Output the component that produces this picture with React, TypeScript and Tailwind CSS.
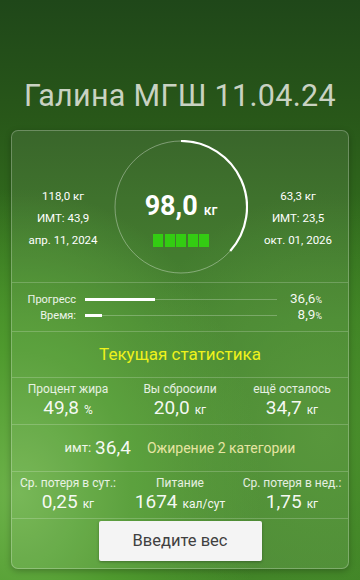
const stats = [
  { label: 'Процент жира', value: '49,8', unit: '%' },
  { label: 'Вы сбросили', value: '20,0', unit: 'кг' },
  { label: 'ещё осталось', value: '34,7', unit: 'кг' },
]

const loss = [
  { label: 'Ср. потеря в сут.:', value: '0,25', unit: 'кг' },
  { label: 'Питание', value: '1674', unit: 'кал/сут' },
  { label: 'Ср. потеря в нед.:', value: '1,75', unit: 'кг' },
]

const bars = [
  { label: 'Прогресс', pct: 36.6, text: '36,6' },
  { label: 'Время:', pct: 8.9, text: '8,9' },
]

function Ring({ pct }: { pct: number }) {
  const a = (pct / 100) * Math.PI * 2
  const r = 66
  const x = 67 + r * Math.sin(a)
  const y = 67 - r * Math.cos(a)
  return (
    <svg width="134" height="134" className="absolute inset-0">
      <circle cx="67" cy="67" r={r} fill="none" stroke="rgba(255,255,255,0.35)" strokeWidth="1" />
      <path
        d={`M67 1 A${r} ${r} 0 ${pct > 50 ? 1 : 0} 1 ${x} ${y}`}
        fill="none"
        stroke="#fff"
        strokeWidth="2.2"
      />
    </svg>
  )
}

function StatRow({ items }: { items: typeof stats }) {
  return (
    <div className="grid grid-cols-3 h-[47px] items-center border-b border-white/20">
      {items.map((s) => (
        <div key={s.label} className="flex flex-col items-center">
          <span className="text-[12px] leading-[15px] text-white/85">{s.label}</span>
          <span className="text-[19px] leading-[22px] text-white/95">
            {s.value}
            <span className="text-[12px] ml-[5px]">{s.unit}</span>
          </span>
        </div>
      ))}
    </div>
  )
}

export default function App() {
  return (
    <div
      className="w-[360px] h-[580px] overflow-hidden flex flex-col"
      style={{
        fontFamily: 'Roboto, "Noto Sans", sans-serif',
        background:
          'radial-gradient(ellipse 90% 70% at 5% 85%, #6db24a 0%, #4f9a2e 35%, rgba(60,130,35,0) 75%), radial-gradient(ellipse 80% 60% at 90% 75%, #4a8f2c 0%, rgba(70,140,40,0) 70%), linear-gradient(180deg, #1f4719 0%, #285719 20%, #397c20 55%, #3f8126 100%)',
      }}
    >
      <h1 className="pt-[78px] text-center text-[30.5px] leading-[36px] text-[#c9d2c2] tracking-[0.3px]">
        Галина МГШ 11.04.24
      </h1>

      <div className="mt-[16px] mx-[11px] h-[439px] rounded-[7px] border border-white/25 bg-white/[0.08] shadow-[0_2px_6px_rgba(0,0,0,0.25)] flex flex-col">
        {/* top block */}
        <div className="h-[152px] flex items-start border-b border-white/20 text-white text-[11.5px]">
          <div className="w-[102px] pt-[58px] flex flex-col items-center gap-[8px] leading-[14px]">
            <span>118,0 кг</span>
            <span>ИМТ: 43,9</span>
            <span>апр. 11, 2024</span>
          </div>
          <div className="relative mt-[9px] w-[134px] h-[134px]">
            <Ring pct={36.6} />
            <div className="absolute inset-0 flex flex-col items-center pt-[51px]">
              <div className="flex items-baseline">
                <span className="text-[27px] leading-[30px] font-bold">98,0</span>
                <span className="text-[14px] font-medium ml-[6px]">кг</span>
              </div>
              <div className="flex gap-[1.5px] mt-[13px]">
                {[0, 1, 2, 3, 4].map((i) => (
                  <div key={i} className="w-[10px] h-[13px] bg-[#33cc12]" />
                ))}
              </div>
            </div>
          </div>
          <div className="w-[100px] pt-[58px] flex flex-col items-center gap-[8px] leading-[14px]">
            <span>63,3 кг</span>
            <span>ИМТ: 23,5</span>
            <span>окт. 01, 2026</span>
          </div>
        </div>

        {/* progress */}
        <div className="h-[49px] flex flex-col justify-center border-b border-white/20">
          {bars.map((b) => (
            <div key={b.label} className="flex items-center h-[16px]">
              <span className="w-[64px] text-right text-[11px] leading-[13px] text-white/90">{b.label}</span>
              <div className="relative ml-[9px] w-[192px] h-[3px]">
                <div className="absolute left-0 right-0 top-[1px] h-[1px] bg-white/25" />
                <div className="absolute left-0 top-0 h-[3px] bg-white" style={{ width: `${b.pct}%` }} />
              </div>
              <span className="ml-auto mr-[26px] text-[13.5px] text-white/95 leading-[16px]">
                {b.text}
                <span className="text-[9px]">%</span>
              </span>
            </div>
          ))}
        </div>

        <div className="h-[46px] flex items-center justify-center border-b border-white/20">
          <span className="text-[17px] text-[#eef21c]">Текущая статистика</span>
        </div>

        <StatRow items={stats} />

        <div className="h-[47px] flex items-center justify-center border-b border-white/20">
          <span className="text-[13px] text-white/90">имт:</span>
          <span className="text-[19px] text-white/95 ml-[4px]">36,4</span>
          <span className="text-[14px] text-[#e6e4a2] ml-[16px]">Ожирение 2 категории</span>
        </div>

        <StatRow items={loss} />

        <div className="flex-1 flex justify-center pt-[2px]">
          <button className="w-[163px] h-[40px] bg-[#f4f4f4] rounded-[2px] shadow-[0_1px_3px_rgba(0,0,0,0.3)] text-[16.5px] text-[#404040]">
            Введите вес
          </button>
        </div>
      </div>
    </div>
  )
}
